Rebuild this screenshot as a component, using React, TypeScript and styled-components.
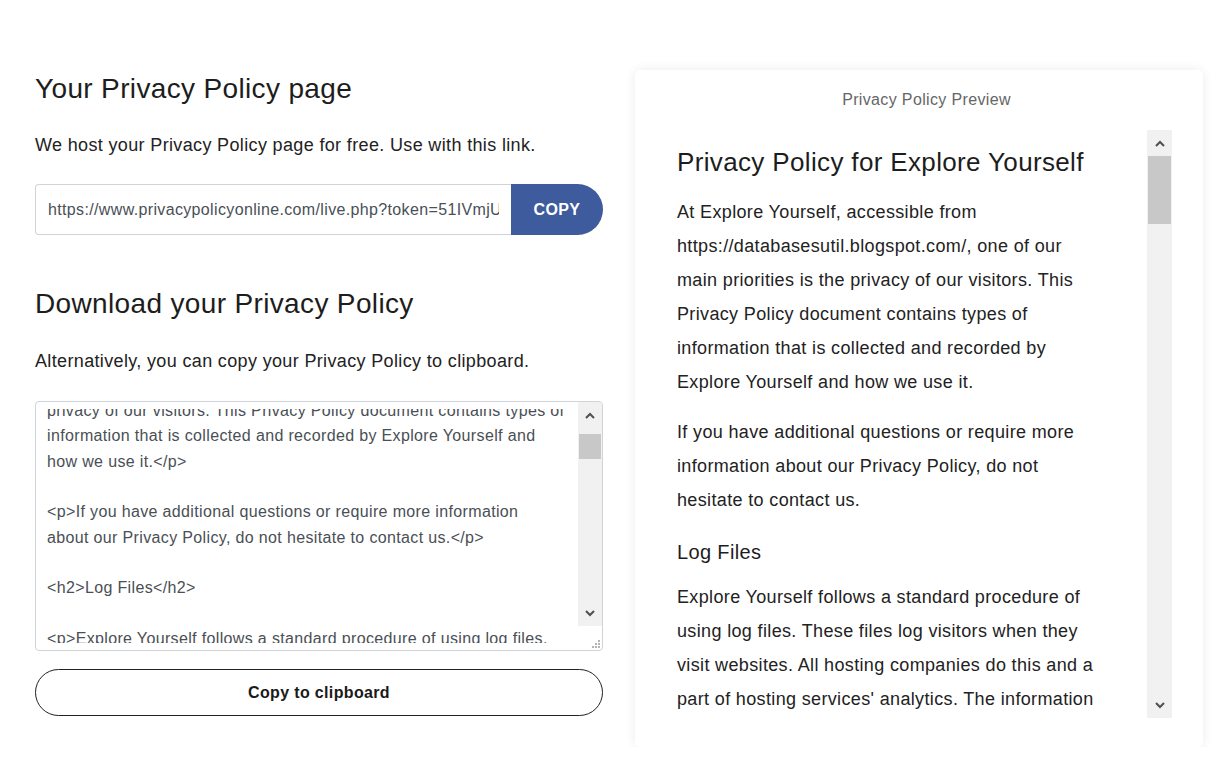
import React, { useLayoutEffect, useRef } from 'react';
import styled, { createGlobalStyle } from 'styled-components';

const GlobalStyle = createGlobalStyle`
  html, body {
    margin: 0;
    padding: 0;
    background: #fff;
  }
  body {
    font-family: "Liberation Sans", Arial, sans-serif;
    letter-spacing: 0.022em;
    color: #222;
  }
  * { box-sizing: border-box; }
`;

const Page = styled.div`
  display: grid;
  grid-template-columns: 568px 568px;
  column-gap: 32px;
  align-items: start;
  padding: 70px 0 0 35px;
`;

const LeftCol = styled.section`
  display: flex;
  flex-direction: column;
  padding-top: 2px;
`;

const Title = styled.h2<{ $top?: number }>`
  margin: ${(p) => p.$top || 0}px 0 0;
  font-size: 28px;
  font-weight: 400;
  line-height: 34px;
  color: #1d1d1d;
`;

const Lead = styled.p<{ $loose?: boolean }>`
  margin: ${(p) => (p.$loose ? '27px 0 26px' : '26px 0 25px')};
  font-size: 18px;
  line-height: 27px;
  color: #222;
`;

const UrlGroup = styled.div`
  display: flex;
  height: 51px;
`;

const UrlInput = styled.input`
  flex: 1;
  min-width: 0;
  border: 1px solid #ced4da;
  border-right: none;
  border-radius: 4px 0 0 4px;
  padding: 0 12px;
  font: 16px "Liberation Sans", Arial, sans-serif;
  letter-spacing: 0.022em;
  color: #495057;
  outline: none;
`;

const CopyButton = styled.button`
  width: 92px;
  border: none;
  border-radius: 0 26px 26px 0;
  background: #3d5b9d;
  color: #fff;
  font: bold 16px "Liberation Sans", Arial, sans-serif;
  letter-spacing: 0.022em;
  cursor: pointer;
`;

const CodeBox = styled.div`
  display: flex;
  height: 250px;
  border: 1px solid #ced4da;
  border-radius: 4px;
  overflow: hidden;
`;

const CodeClip = styled.div`
  flex: 1;
  padding: 7px 0;
  display: flex;
`;

const CodeViewport = styled.div`
  flex: 1;
  overflow: hidden;
  padding: 0 13px 0 11px;
`;

const CodeText = styled.div`
  position: relative;
  white-space: pre-wrap;
  font-size: 16px;
  line-height: 25.3px;
  color: #4a4f55;
`;

const SideRail = styled.div`
  width: 24px;
  display: flex;
  flex-direction: column;
`;

const Corner = styled.div`
  flex: 1;
  display: flex;
  align-items: flex-end;
  justify-content: flex-end;
  padding: 0 2px 2px 0;
`;

const ScrollBar = styled.div<{ $w: number; $h: number }>`
  width: ${(p) => p.$w}px;
  height: ${(p) => p.$h}px;
  background: #f1f1f1;
  display: flex;
  flex-direction: column;
  flex-shrink: 0;
`;

const ArrowBox = styled.div`
  height: 26px;
  display: flex;
  align-items: center;
  justify-content: center;
`;

const Track = styled.div`
  flex: 1;
`;

const Thumb = styled.div<{ $top: number; $h: number }>`
  margin: ${(p) => p.$top}px 1px 0;
  height: ${(p) => p.$h}px;
  background: #c8c8c8;
`;

const ClipboardButton = styled.button`
  margin-top: 18px;
  height: 47px;
  border: 1px solid #222;
  border-radius: 24px;
  background: #fff;
  color: #1a1a1a;
  font: bold 16px "Liberation Sans", Arial, sans-serif;
  letter-spacing: 0.022em;
  cursor: pointer;
`;

const Card = styled.section`
  height: 677px;
  background: #fff;
  border-radius: 5px;
  box-shadow: 0 0 12px rgba(0, 0, 0, 0.08);
  padding: 20px 31px 29px 20px;
  display: flex;
  flex-direction: column;
`;

const CardTitle = styled.div`
  text-align: center;
  padding-left: 26px;
  font-size: 16px;
  line-height: 20px;
  color: #666;
  margin-bottom: 20px;
`;

const PreviewBody = styled.div`
  flex: 1;
  display: flex;
  min-height: 0;
`;

const PreviewScroll = styled.div`
  flex: 1;
  overflow: hidden;
  padding: 0 42px 0 22px;
  color: #222;
`;

const PreviewH1 = styled.h1`
  margin: 17px 0 17px;
  font-size: 26px;
  font-weight: 400;
  line-height: 31px;
  color: #1d1d1d;
`;

const PreviewH2 = styled.h2`
  margin: 23px 0 16px;
  font-size: 20px;
  font-weight: 400;
  line-height: 24px;
  color: #1d1d1d;
`;

const PreviewP = styled.p`
  margin: 0 0 16px;
  font-size: 18px;
  line-height: 34px;
`;

const Chevron = ({ up }: { up?: boolean }) => (
  <svg width="10" height="7" viewBox="0 0 10 7">
    <polyline
      points={up ? '1,6 5,2 9,6' : '1,1 5,5 9,1'}
      fill="none"
      stroke="#505050"
      strokeWidth="2"
    />
  </svg>
);

const Grip = () => (
  <svg width="9" height="9" viewBox="0 0 9 9">
    {[
      [7, 1], [4, 4], [7, 4], [1, 7], [4, 7], [7, 7],
    ].map(([x, y]) => (
      <rect key={`${x}-${y}`} x={x} y={y} width="2" height="2" fill="#b5b5b5" />
    ))}
  </svg>
);

interface BarProps {
  width: number;
  height: number;
  thumbTop: number;
  thumbHeight: number;
}

const Scroller: React.FC<BarProps> = ({ width, height, thumbTop, thumbHeight }) => (
  <ScrollBar $w={width} $h={height}>
    <ArrowBox><Chevron up /></ArrowBox>
    <Track>
      <Thumb $top={thumbTop} $h={thumbHeight} />
    </Track>
    <ArrowBox><Chevron /></ArrowBox>
  </ScrollBar>
);

const policyUrl = 'https://www.privacypolicyonline.com/live.php?token=51IVmjUhXc0rTqJ8B2wPzLk';

export default function App() {
  const viewRef = useRef<HTMLDivElement>(null);
  const markRef = useRef<HTMLSpanElement>(null);

  useLayoutEffect(() => {
    // scroll the code box so the "privacy of our visitors" line is half cut
    if (viewRef.current && markRef.current) {
      viewRef.current.scrollTop = Math.round(markRef.current.offsetTop + 7);
    }
  }, []);

  return (
    <>
      <GlobalStyle />
      <Page>
        <LeftCol>
          <Title>Your Privacy Policy page</Title>
          <Lead>We host your Privacy Policy page for free. Use with this link.</Lead>
          <UrlGroup>
            <UrlInput readOnly value={policyUrl} />
            <CopyButton>COPY</CopyButton>
          </UrlGroup>

          <Title $top={52}>Download your Privacy Policy</Title>
          <Lead $loose>Alternatively, you can copy your Privacy Policy to clipboard.</Lead>

          <CodeBox>
            <CodeClip>
              <CodeViewport ref={viewRef}>
                <CodeText>
                  {'<h1>Privacy Policy for Explore Yourself</h1>\n\n<p>At Explore Yourself, accessible from https://databasesutil.blogspot.com/, one of our main priorities is the '}
                  <span ref={markRef}>privacy</span>
                  {' of our visitors. This Privacy Policy document contains types of information that is collected and recorded by Explore Yourself and how we use it.</p>\n\n<p>If you have additional questions or require more information\nabout our Privacy Policy, do not hesitate to contact us.</p>\n\n<h2>Log Files</h2>\n\n<p>Explore Yourself follows a standard procedure of using log files. These files log visitors when they visit websites. All hosting companies do this and a part of hosting services\' analytics.</p>'}
                </CodeText>
              </CodeViewport>
            </CodeClip>
            <SideRail>
              <Scroller width={24} height={224} thumbTop={6} thumbHeight={25} />
              <Corner><Grip /></Corner>
            </SideRail>
          </CodeBox>

          <ClipboardButton>Copy to clipboard</ClipboardButton>
        </LeftCol>

        <Card>
          <CardTitle>Privacy Policy Preview</CardTitle>
          <PreviewBody>
            <PreviewScroll>
              <PreviewH1>Privacy Policy for Explore Yourself</PreviewH1>
              <PreviewP>
                At Explore Yourself, accessible from https://databasesutil.blogspot.com/, one of our main
                priorities is the privacy of our visitors. This Privacy Policy document contains types of
                information that is collected and recorded by Explore Yourself and how we use it.
              </PreviewP>
              <PreviewP>
                If you have additional questions or require more information about our Privacy Policy, do not
                hesitate to contact us.
              </PreviewP>
              <PreviewH2>Log Files</PreviewH2>
              <PreviewP>
                Explore Yourself follows a standard procedure of using log files. These files log visitors when
                they visit websites. All hosting companies do this and a part of hosting services' analytics. The
                information collected by log files include internet protocol (IP) addresses, browser type, Internet
                Service Provider (ISP), date and time stamp, referring/exit pages, and possibly the number of clicks.
              </PreviewP>
            </PreviewScroll>
            <Scroller width={25} height={588} thumbTop={0} thumbHeight={68} />
          </PreviewBody>
        </Card>
      </Page>
    </>
  );
}
